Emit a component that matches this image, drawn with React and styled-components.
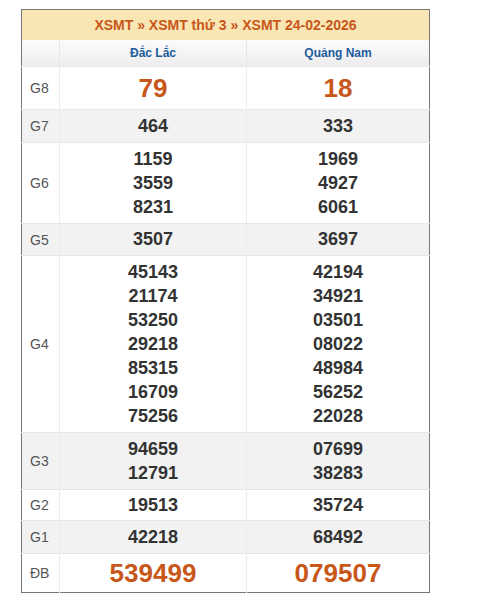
import React from "react";
import styled, { createGlobalStyle } from "styled-components";

const Global = createGlobalStyle`
  html, body { margin: 0; padding: 0; background: #fff; }
  body { font-family: "Liberation Sans", Arial, sans-serif; }
`;

const Page = styled.div`
  padding: 9px 0 0 21px;
`;

const Table = styled.table`
  width: 409px;
  border-collapse: collapse;
  table-layout: fixed;
  border: 1px solid #777;
`;

const TitleCell = styled.th`
  height: 30px;
  padding: 0;
  background: #f8e6b4;
  color: #c8571a;
  font-size: 14px;
  font-weight: bold;
  text-align: center;
  vertical-align: middle;
`;

const HeadCell = styled.th`
  height: 26px;
  padding: 0;
  background: linear-gradient(#fbfbfb, #ededed);
  color: #1d5c9d;
  font-size: 12px;
  font-weight: bold;
  text-align: center;
  vertical-align: middle;
  border-left: 1px solid #e6e6e6;
  &:first-child { border-left: none; }
`;

const Row = styled.tr`
  background: ${(p) => (p.$alt ? "#f2f2f2" : "#fff")};
  border-top: 1px solid #e6e6e6;
`;

const Label = styled.td`
  padding: 4px 0 4px 8px;
  color: #555;
  font-size: 14px;
  vertical-align: middle;
`;

const Cell = styled.td`
  padding: 4px 0;
  text-align: center;
  vertical-align: middle;
  border-left: 1px solid #ececec;
  color: ${(p) => (p.$big ? "#c8571a" : "#333")};
  font-weight: bold;
  font-size: ${(p) => (p.$big ? "26px" : "18px")};
  line-height: ${(p) => p.$lh || 24}px;
`;

const Num = styled.div``;

const rows = [
  { g: "G8", a: ["79"], b: ["18"], big: true, lh: 34 },
  { g: "G7", a: ["464"], b: ["333"] },
  { g: "G6", a: ["1159", "3559", "8231"], b: ["1969", "4927", "6061"] },
  { g: "G5", a: ["3507"], b: ["3697"], lh: 23 },
  {
    g: "G4",
    a: ["45143", "21174", "53250", "29218", "85315", "16709", "75256"],
    b: ["42194", "34921", "03501", "08022", "48984", "56252", "22028"],
  },
  { g: "G3", a: ["94659", "12791"], b: ["07699", "38283"] },
  { g: "G2", a: ["19513"], b: ["35724"], lh: 22 },
  { g: "G1", a: ["42218"], b: ["68492"] },
  { g: "ĐB", a: ["539499"], b: ["079507"], big: true, lh: 30 },
];

export default function App() {
  return (
    <Page>
      <Global />
      <Table>
        <colgroup>
          <col style={{ width: 38 }} />
          <col style={{ width: 187 }} />
          <col />
        </colgroup>
        <thead>
          <tr>
            <TitleCell colSpan={3}>XSMT » XSMT thứ 3 » XSMT 24-02-2026</TitleCell>
          </tr>
          <tr>
            <HeadCell></HeadCell>
            <HeadCell>Đắc Lắc</HeadCell>
            <HeadCell>Quảng Nam</HeadCell>
          </tr>
        </thead>
        <tbody>
          {rows.map((r, i) => (
            <Row key={r.g} $alt={i % 2 === 1}>
              <Label>{r.g}</Label>
              <Cell $big={r.big} $lh={r.lh}>
                {r.a.map((n, k) => (
                  <Num key={k}>{n}</Num>
                ))}
              </Cell>
              <Cell $big={r.big} $lh={r.lh}>
                {r.b.map((n, k) => (
                  <Num key={k}>{n}</Num>
                ))}
              </Cell>
            </Row>
          ))}
        </tbody>
      </Table>
    </Page>
  );
}
